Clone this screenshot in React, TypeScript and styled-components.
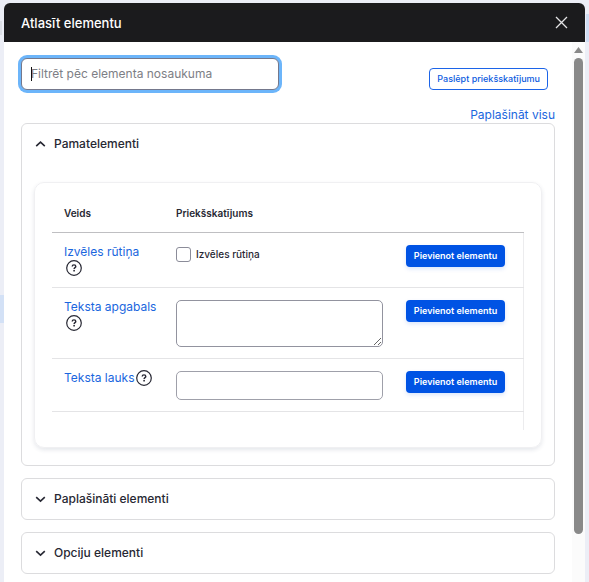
import React, { useState } from "react";
import styled, { createGlobalStyle } from "styled-components";

const Global = createGlobalStyle`
  * { box-sizing: border-box; }
  body {
    margin: 0;
    background: #eceef6;
    color: #272833;
    font-family: Inter, "Liberation Sans", sans-serif;
    font-size: 12px;
    overflow: hidden;
  }
  button, input, textarea { font-family: inherit; }
`;

const Backdrop = styled.div`
  display: flex;
  height: 100vh;
  padding: 3px 4px 0;
  background:
    linear-gradient(#cfddf3, #cfddf3) right 14px / 3px 28px no-repeat,
    linear-gradient(#dcdfe6, #dcdfe6) 0 21px / 2px 14px no-repeat,
    linear-gradient(#d3e1f6, #d3e1f6) 0 295px / 4px 28px no-repeat,
    #eceef6;
`;

const Dialog = styled.section`
  flex: 1;
  min-width: 0;
  display: flex;
  flex-direction: column;
  background: #fff;
  border-radius: 6px 6px 0 0;
  overflow: hidden;
`;

const Header = styled.header`
  display: flex;
  align-items: center;
  justify-content: space-between;
  flex: none;
  height: 39px;
  padding: 0 17px;
  background: #1b1b1d;
  color: #fff;
`;

const Title = styled.h1`
  margin: 0;
  font-size: 13px;
  font-weight: 500;
`;

const CloseButton = styled.button`
  display: flex;
  padding: 0 0 1px;
  border: 0;
  background: none;
  color: #e4e4e6;
`;

const Body = styled.div`
  flex: 1;
  min-height: 0;
  display: flex;
`;

const Content = styled.main`
  flex: 1;
  min-width: 0;
  padding: 16px 17px 0;
  overflow: hidden;
`;

const Toolbar = styled.div`
  display: flex;
  align-items: center;
  justify-content: space-between;
  height: 32px;
`;

const FilterBox = styled.label`
  position: relative;
  display: block;
  width: 258px;
`;

const FilterInput = styled.input`
  display: block;
  width: 100%;
  height: 32px;
  padding: 0 9px 2px;
  border: 1px solid #74788c;
  border-radius: 6px;
  outline: none;
  box-shadow: 0 0 0 3px #6cb5fa;
  caret-color: transparent;
  color: #272833;
  font-size: 12px;
  &::placeholder { color: #7d7e85; opacity: 1; }
`;

const Caret = styled.span`
  position: absolute;
  left: 10px;
  top: 9px;
  width: 1px;
  height: 14px;
  background: #111;
`;

const OutlineButton = styled.button`
  height: 22px;
  margin: 10px 7px 0 0;
  padding: 0 7px 1px;
  border: 1px solid #1c64e8;
  border-radius: 4px;
  background: #fff;
  color: #0b5be0;
  font-size: 9px;
  font-weight: 500;
  white-space: nowrap;
`;

const ExpandLine = styled.div`
  display: flex;
  justify-content: flex-end;
  height: 33px;
  align-items: flex-end;
`;

const TextLink = styled.a`
  color: #1a66de;
  font-size: 12px;
  line-height: 16px;
  text-decoration: none;
`;

const Panels = styled.div`
  display: flex;
  flex-direction: column;
  gap: 12px;
`;

const Panel = styled.section`
  border: 1px solid #dcdcde;
  border-radius: 6px;
`;

const PanelToggle = styled.button`
  display: flex;
  align-items: center;
  gap: 7px;
  width: 100%;
  height: 40px;
  padding: 0 12px 2px;
  border: 0;
  background: none;
  color: #272833;
  font-size: 12px;
  font-weight: 500;
  text-align: left;
`;

const Card = styled.div`
  margin: 18px 12px 17px;
  padding: 17px;
  border: 1px solid #f0f0f2;
  border-radius: 10px;
  box-shadow: 0 2px 4px rgba(40, 60, 90, 0.12);
`;

const TableFrame = styled.div`
  height: 230px;
  background: linear-gradient(#ececee, #ececee) right 32px / 1px 198px no-repeat;
`;

const Table = styled.table`
  width: 100%;
  border-collapse: collapse;
  table-layout: fixed;
`;

const HeadCell = styled.th<{ $width?: number }>`
  width: ${(p) => (p.$width ? `${p.$width}px` : "auto")};
  height: 32px;
  padding: 0 12px 6px;
  border-bottom: 1px solid #bfbfc2;
  font-size: 10px;
  font-weight: 600;
  text-align: left;
`;

const Cell = styled.td`
  padding: 12px 12px 11px;
  border-bottom: 1px solid #e4e4e6;
  vertical-align: top;
`;

const NameCell = styled(Cell)`
  padding: 10px 8px 11px 12px;
  line-height: 16px;
`;

const ActionCell = styled(Cell)`
  padding: 12px 19px 11px 11px;
`;

const NameText = styled(TextLink)`
  vertical-align: middle;
  white-space: nowrap;
`;

const HelpButton = styled.button`
  display: inline-flex;
  margin: 0 0 0 2px;
  padding: 0;
  border: 0;
  background: none;
  vertical-align: middle;
`;

const AddButton = styled.button`
  display: block;
  width: 100%;
  height: 22px;
  padding: 0 0 1px;
  border: 0;
  border-radius: 4px;
  background: #0053e4;
  box-shadow: 0 2px 4px rgba(0, 83, 228, 0.15);
  color: #fff;
  font-size: 9px;
  font-weight: 600;
  white-space: nowrap;
`;

const CheckLabel = styled.label`
  display: flex;
  align-items: center;
  gap: 5px;
  padding-top: 2px;
  font-size: 10px;
  font-weight: 500;
`;

const CheckBox = styled.input`
  appearance: none;
  width: 15px;
  height: 15px;
  margin: 0;
  border: 1px solid #8b8c99;
  border-radius: 3px;
  background: #fff;
  &:checked { background: #0053e4; }
`;

const TextArea = styled.textarea`
  display: block;
  width: 100%;
  height: 47px;
  border: 1px solid #92939f;
  border-radius: 5px;
  outline: none;
`;

const TextField = styled.input`
  display: block;
  width: 100%;
  height: 29px;
  border: 1px solid #9fa0aa;
  border-radius: 5px;
  outline: none;
`;

const Track = styled.div`
  flex: none;
  display: flex;
  flex-direction: column;
  align-items: center;
  gap: 5px;
  width: 13px;
  padding-top: 5px;
  background: #fbfbfb;
`;

const Thumb = styled.div`
  width: 9px;
  height: 89%;
  border-radius: 5px;
  background: #898989;
`;

const Chevron = ({ open }: { open: boolean }) => (
  <svg width="13" height="12" viewBox="0 0 13 12" fill="none" stroke="#272833" strokeWidth="1.6" aria-hidden="true">
    <path d={open ? "M2.2 9.2 6.5 5.2l4.3 4" : "M2.2 5.2 6.5 9.2l4.3-4"} />
  </svg>
);

const Help = () => (
  <HelpButton type="button" aria-label="Palīdzība">
    <svg width="16" height="16" viewBox="0 0 16 16" fill="none" stroke="#272833" aria-hidden="true">
      <circle cx="8" cy="8" r="7.3" strokeWidth="1.2" />
      <path d="M6.2 6.4C6.2 5.3 7 4.9 8 4.9s1.8.5 1.8 1.5c0 1.2-1.7 1.3-1.7 2.5" strokeWidth="1.4" />
      <circle cx="8.1" cy="10.7" r=".9" fill="#272833" stroke="none" />
    </svg>
  </HelpButton>
);

const rows = [
  {
    name: "Izvēles rūtiņa",
    preview: (
      <CheckLabel>
        <CheckBox type="checkbox" />
        Izvēles rūtiņa
      </CheckLabel>
    ),
  },
  { name: "Teksta apgabals", preview: <TextArea aria-label="Teksta apgabals" /> },
  { name: "Teksta lauks", preview: <TextField type="text" aria-label="Teksta lauks" /> },
];

const ElementTable = () => (
  <Card>
    <TableFrame>
      <Table>
        <thead>
          <tr>
            <HeadCell scope="col" $width={112}>Veids</HeadCell>
            <HeadCell scope="col">Priekšskatījums</HeadCell>
            <HeadCell scope="col" $width={129} aria-label="Darbība" />
          </tr>
        </thead>
        <tbody>
          {rows.map((row) => (
            <tr key={row.name}>
              <NameCell>
                <NameText href="#">{row.name}</NameText>
                <wbr />
                <Help />
              </NameCell>
              <Cell>{row.preview}</Cell>
              <ActionCell>
                <AddButton type="button">Pievienot elementu</AddButton>
              </ActionCell>
            </tr>
          ))}
        </tbody>
      </Table>
    </TableFrame>
  </Card>
);

export default function App() {
  const [open, setOpen] = useState<Record<string, boolean>>({ Pamatelementi: true });
  const [filter, setFilter] = useState("");
  return (
    <Backdrop>
      <Global />
      <Dialog role="dialog" aria-labelledby="dialog-title">
        <Header>
          <Title id="dialog-title">Atlasīt elementu</Title>
          <CloseButton type="button" aria-label="Aizvērt">
            <svg width="13" height="13" viewBox="0 0 13 13" stroke="currentColor" strokeWidth="1.3" aria-hidden="true">
              <path d="M1 1l11 11M12 1L1 12" />
            </svg>
          </CloseButton>
        </Header>
        <Body>
          <Content>
            <Toolbar>
              <FilterBox>
                <FilterInput
                  type="text"
                  aria-label="Filtrēt pēc elementa nosaukuma"
                  placeholder="Filtrēt pēc elementa nosaukuma"
                  value={filter}
                  onChange={(e) => setFilter(e.target.value)}
                />
                {filter === "" && <Caret />}
              </FilterBox>
              <OutlineButton type="button">Paslēpt priekšskatījumu</OutlineButton>
            </Toolbar>
            <ExpandLine>
              <TextLink href="#">Paplašināt visu</TextLink>
            </ExpandLine>
            <Panels>
              {["Pamatelementi", "Paplašināti elementi", "Opciju elementi"].map((name) => (
                <Panel key={name}>
                  <PanelToggle
                    type="button"
                    aria-expanded={!!open[name]}
                    onClick={() => setOpen({ ...open, [name]: !open[name] })}
                  >
                    <Chevron open={!!open[name]} />
                    {name}
                  </PanelToggle>
                  {name === "Pamatelementi" && open[name] && <ElementTable />}
                </Panel>
              ))}
            </Panels>
          </Content>
          <Track aria-hidden="true">
            <svg width="9" height="6" viewBox="0 0 9 6">
              <path d="M4.5 0 9 6H0z" fill="#898989" />
            </svg>
            <Thumb />
          </Track>
        </Body>
      </Dialog>
    </Backdrop>
  );
}
